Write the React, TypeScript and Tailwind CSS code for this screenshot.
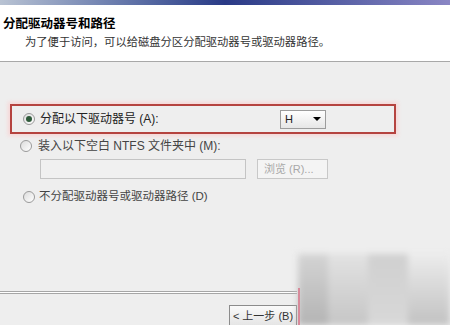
const Radio = ({ checked }: { checked?: boolean }) => (
  <span className="w-[12px] h-[12px] rounded-full border border-[#9a9a9a] bg-gradient-to-br from-[#dcdcdc] to-white flex items-center justify-center shrink-0">
    {checked && <span className="w-[6px] h-[6px] rounded-full bg-[#2f5a3a]"></span>}
  </span>
);

const App = () => {
  return (
    <div
      className="w-[450px] h-[325px] overflow-hidden bg-[#eeeeee] flex flex-col relative text-[#222] text-[12px]"
      style={{ fontFamily: '"Liberation Sans", "Noto Sans CJK SC", sans-serif' }}
    >
      <div className="h-[5px] bg-gradient-to-r from-[#b9c3d3] via-[#2a3a86] to-[#8a86c4] shrink-0"></div>
      <div className="h-[57px] bg-white shrink-0 pt-[11px] pl-[3px] border-b border-[#a8a8a8]">
        <div className="font-bold text-[12.5px] leading-[16px] text-black">分配驱动器号和路径</div>
        <div className="pl-[22px] mt-[3px] leading-[15px] text-[11.3px] text-[#333]">
          为了便于访问，可以给磁盘分区分配驱动器号或驱动器路径。
        </div>
      </div>

      <div className="flex-1 flex flex-col">
        <div className="mt-[42px] ml-[10px] w-[386px] h-[30px] border-2 border-[#b5433f] shadow-[0_0_4px_2px_#f7d6d6] flex items-center pl-[11px] pr-[68px]">
          <Radio checked />
          <span className="ml-[5px] flex-1">分配以下驱动器号 (A):</span>
          <div className="w-[46px] h-[19px] border border-[#9c9c9c] bg-gradient-to-b from-white to-[#e6e6e6] flex items-center justify-between px-[4px] text-[11px]">
            <span>H</span>
            <span className="w-0 h-0 border-l-[4px] border-r-[4px] border-t-[4px] border-l-transparent border-r-transparent border-t-black"></span>
          </div>
        </div>

        <div className="flex items-center ml-[20px] mt-[4px] h-[16px] text-[#444]">
          <Radio />
          <span className="ml-[6px]">装入以下空白 NTFS 文件夹中 (M):</span>
        </div>

        <div className="flex ml-[40px] mt-[5px] gap-[11px]">
          <div className="w-[206px] h-[20px] border border-[#c4c4c4] bg-[#f0f0f0]"></div>
          <div className="w-[71px] h-[20px] border border-[#c8c8c8] bg-[#f4f4f4] text-[#a8a8a8] flex items-center pl-[6px] text-[11px]">
            浏览 (R)...
          </div>
        </div>

        <div className="flex items-center ml-[23px] mt-[10px] h-[16px] text-[#444]">
          <Radio />
          <span className="ml-[4px] text-[11.5px]">不分配驱动器号或驱动器路径 (D)</span>
        </div>

        <div className="flex-1"></div>

        <div className="w-[297px] h-[3px] border-t border-b border-[#a6a6a6] bg-white shrink-0"></div>
        <div className="h-[31px] shrink-0 flex justify-start pl-[229px] pt-[11px]">
          <div className="w-[68px] h-[22px] border border-[#8c8c8c] bg-gradient-to-b from-[#fafafa] to-[#e4e4e4] flex items-center justify-center text-[11px] text-[#333] whitespace-nowrap">
            &lt; 上一步 (B)
          </div>
        </div>
      </div>

      <div className="absolute left-[298px] top-[254px] w-[152px] h-[71px] blur-[3px] flex">
        <div className="w-[30px] bg-gradient-to-b from-[#d4d4d4] to-[#b4b4b4]"></div>
        <div className="w-[40px] bg-gradient-to-b from-[#e2e2e2] to-[#c6c6c6]"></div>
        <div className="w-[40px] bg-gradient-to-b from-[#d0d0d0] to-[#d8d8d8]"></div>
        <div className="w-[42px] bg-gradient-to-b from-[#ececec] to-[#c2c2c2]"></div>
      </div>
      <div className="absolute left-[298px] top-[288px] w-[2px] h-[37px] bg-[#d78a9a]"></div>
    </div>
  );
};

export default App;
